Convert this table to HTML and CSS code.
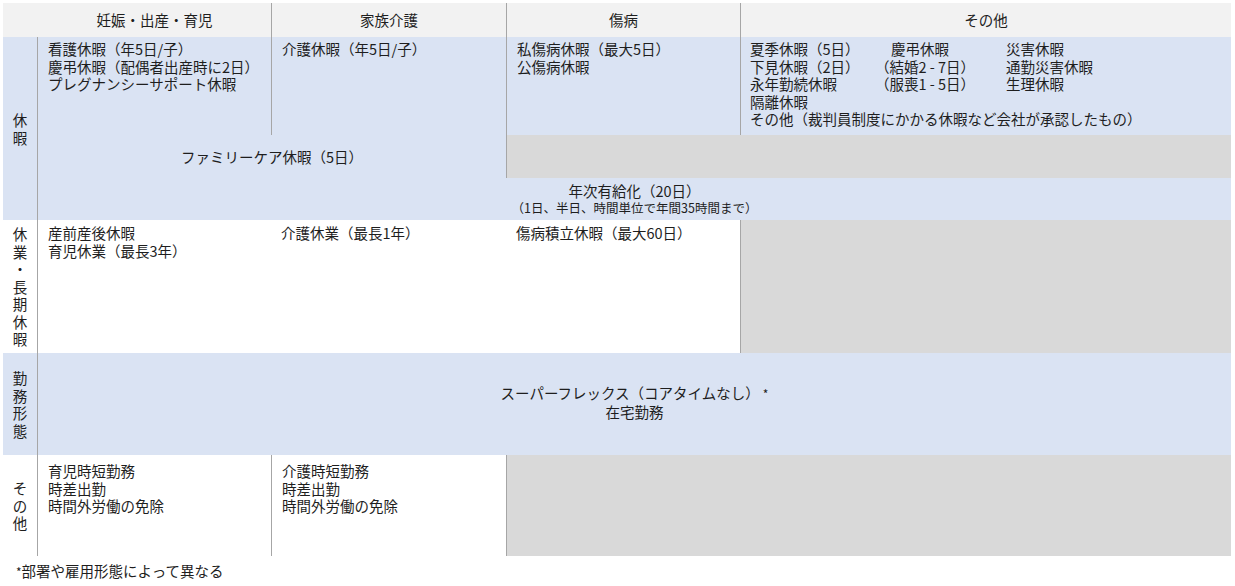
FILE: index.html
```html
<!DOCTYPE html>
<html lang="ja">
<head>
<meta charset="utf-8">
<title>休暇制度</title>
<link rel="stylesheet" href="styles.css">
</head>
<body>
<div class="table">
  <div class="hd hd-corner"></div>
  <div class="hd">妊娠・出産・育児</div>
  <div class="hd sep">家族介護</div>
  <div class="hd sep">傷病</div>
  <div class="hd sep">その他</div>

  <div class="label blue label-kyuka">休<br>暇</div>
  <div class="cell blue r1">看護休暇（年5日/子）<br>慶弔休暇（配偶者出産時に2日）<br>プレグナンシーサポート休暇</div>
  <div class="cell blue r1 sep">介護休暇（年5日/子）</div>
  <div class="cell blue r1 sep">私傷病休暇（最大5日）<br>公傷病休暇</div>
  <div class="cell blue r1 sep other">
    <div class="sub">
      <span>夏季休暇（5日）</span><span class="indent">慶弔休暇</span><span>災害休暇</span>
      <span>下見休暇（2日）</span><span>（結婚2 - 7日）</span><span>通勤災害休暇</span>
      <span>永年勤続休暇</span><span>（服喪1 - 5日）</span><span>生理休暇</span>
      <span class="full">隔離休暇</span>
      <span class="full">その他（裁判員制度にかかる休暇など会社が承認したもの）</span>
    </div>
  </div>
  <div class="cell blue center family">ファミリーケア休暇（5日）</div>
  <div class="gray family-gray sep"></div>
  <div class="cell blue center annual">年次有給化（20日）<span class="small">（1日、半日、時間単位で年間35時間まで）</span></div>

  <div class="label label-kyugyo">休<br>業<br>・<br>長<br>期<br>休<br>暇</div>
  <div class="cell r4">産前産後休暇<br>育児休業（最長3年）</div>
  <div class="cell r4">介護休業（最長1年）</div>
  <div class="cell r4">傷病積立休暇（最大60日）</div>
  <div class="gray r4 sep"></div>

  <div class="label blue label-kinmu">勤<br>務<br>形<br>態</div>
  <div class="cell blue center work">スーパーフレックス（コアタイムなし）<span class="ast">*</span><br>在宅勤務</div>

  <div class="label label-other">そ<br>の<br>他</div>
  <div class="cell r6">育児時短勤務<br>時差出勤<br>時間外労働の免除</div>
  <div class="cell r6 sep">介護時短勤務<br>時差出勤<br>時間外労働の免除</div>
  <div class="gray r6 wide sep"></div>
</div>
<p class="note"><span class="ast">*</span>部署や雇用形態によって異なる</p>
</body>
</html>
```

FILE: styles.css
```css
html, body {
  margin: 0;
  padding: 0;
  background: #ffffff;
}
body {
  padding: 3px;
  font-family: "Noto Sans CJK JP", "Noto Sans", sans-serif;
  font-size: 14.5px;
  line-height: 17.5px;
  color: #1e1e1e;
}
.table {
  display: grid;
  grid-template-columns: 35px 233px 235px 234px 491px;
  grid-template-rows: 34px 98px 43px 42px 133px 102px 101px;
  width: 1228px;
}
.hd {
  background: #f2f2f2;
  display: flex;
  align-items: center;
  justify-content: center;
}
.sep {
  border-left: 1px solid #a6a6a6;
}
.blue {
  background: #dae3f3;
}
.gray {
  background: #d9d9d9;
}
.label {
  grid-column: 1;
  border-right: 1px solid #a6a6a6;
  display: flex;
  align-items: center;
  justify-content: center;
  text-align: center;
  line-height: 17.5px;
}
.label-kyuka { grid-row: 2 / 5; }
.label-kyugyo { grid-row: 5; }
.label-kinmu { grid-row: 6; }
.label-other { grid-row: 7; }
.cell {
  padding: 3px 0 0 10px;
}
.r1 { grid-row: 2; }
.r4 { grid-row: 5; padding-top: 4px; }
.r6 { grid-row: 7; padding-top: 7px; }
.other {
  padding-left: 9px;
}
.sub {
  display: grid;
  grid-template-columns: 125px 131px auto;
}
.sub .full {
  grid-column: 1 / 4;
}
.sub .indent {
  padding-left: 16px;
}
.center {
  padding: 0;
  display: flex;
  flex-direction: column;
  align-items: center;
  justify-content: center;
  text-align: center;
}
.family {
  grid-row: 3;
  grid-column: 2 / 4;
}
.family-gray {
  grid-row: 3;
  grid-column: 4 / 6;
}
.annual {
  grid-row: 4;
  grid-column: 2 / 6;
}
.annual .small {
  font-size: 12.5px;
  line-height: 17px;
}
.work {
  grid-row: 6;
  grid-column: 2 / 6;
  display: block;
  padding-top: 31px;
}
.r4.gray {
  grid-column: 5;
}
.wide {
  grid-column: 4 / 6;
}
.ast {
  font-size: 12px;
  padding-left: 3px;
}
.note {
  margin: 6px 0 0 0;
  padding-left: 13px;
}
.note .ast {
  padding-left: 0;
}
```
